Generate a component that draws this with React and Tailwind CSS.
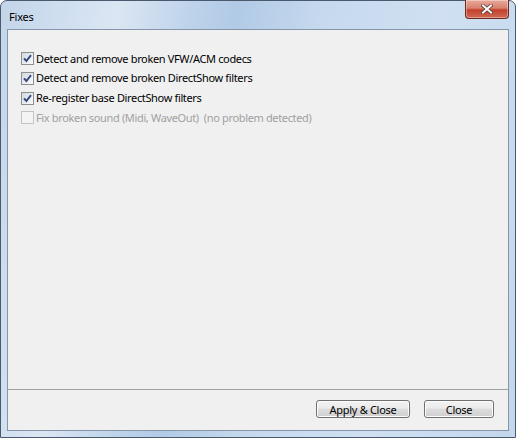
import { useState } from 'react';

const font = { fontFamily: '"Noto Sans", "Open Sans", sans-serif' };

function CheckBox({ checked, disabled }) {
  if (disabled) {
    return (
      <span className="w-[13px] h-[13px] border border-[#c4c4c4] bg-[#f4f4f4] shrink-0" />
    );
  }
  return (
    <span className="w-[13px] h-[13px] border border-[#8e8f8f] bg-[linear-gradient(135deg,#d3d9e1,#fbfbfc)] shrink-0 flex items-center justify-center">
      <svg width="9" height="9" viewBox="0 0 9 9">
        <path d="M1 4.3 L3.4 7 L8 1.2" fill="none" stroke="#35497e" strokeWidth="2" />
      </svg>
    </span>
  );
}

function WinButton({ children, width }) {
  return (
    <button
      className={`${width} h-[18px] rounded-[3px] border border-[#707070] bg-[linear-gradient(#f2f2f2_0%,#ebebeb_45%,#dddddd_50%,#cfcfcf_100%)] text-[11px] tracking-[-0.3px] leading-none text-black shadow-[inset_0_0_0_1px_#fcfcfc]`}
    >
      {children}
    </button>
  );
}

export default function App() {
  const [fixes] = useState([
    { label: 'Detect and remove broken VFW/ACM codecs', checked: true },
    { label: 'Detect and remove broken DirectShow filters', checked: true },
    { label: 'Re-register base DirectShow filters', checked: true },
    { label: 'Fix broken sound (Midi, WaveOut)  (no problem detected)', disabled: true },
  ]);

  return (
    <div
      style={font}
      className="w-[516px] h-[438px] flex flex-col border border-[#4a5a6e] rounded-t-[7px] px-[6px] pb-[6px] bg-[linear-gradient(100deg,#c3d5ea_0%,#d3e1f1_14%,#dbe6f3_20%,#bfd4eb_32%,#b1cae6_40%,#c6d9ee_55%,#d0e0f2_75%,#c3d7ed_100%)]"
    >
      <div className="h-[28px] flex items-start justify-between">
        <span className="text-[11px] tracking-[-0.2px] text-black mt-[8px] ml-[2px]">Fixes</span>
        <div className="w-[44px] h-[19px] -mt-px rounded-b-[4px] border border-[#6b2a20] border-t-0 bg-[linear-gradient(#e9a99a_0%,#d8826f_45%,#c2402b_55%,#d06a52_100%)] flex items-center justify-center shadow-[inset_0_0_0_1px_rgba(255,255,255,0.35)]">
          <svg width="12" height="10" viewBox="0 0 12 10">
            <path d="M2 1.5 L10 8.5 M10 1.5 L2 8.5" stroke="#5a3a34" strokeWidth="3.6" strokeLinecap="square" />
            <path d="M2 1.5 L10 8.5 M10 1.5 L2 8.5" stroke="#ffffff" strokeWidth="2" strokeLinecap="square" />
          </svg>
        </div>
      </div>

      <div className="flex-1 flex flex-col border border-[#8596ab] bg-[#f0f0f0]">
        <div className="flex-1 flex flex-col pt-[19px] pl-[13px]">
          {fixes.map((f) => (
            <div key={f.label} className="h-[19.7px] flex items-center gap-[2px]">
              <CheckBox checked={f.checked} disabled={f.disabled} />
              <span
                className={`text-[11px] tracking-[-0.35px] whitespace-pre ${f.disabled ? 'text-[#a0a0a0]' : 'text-black'}`}
              >
                {f.label}
              </span>
            </div>
          ))}
        </div>
        <div className="h-px bg-[#a0a0a0]" />
        <div className="h-[40px] flex items-start justify-end gap-[14px] pt-[10px] pr-[14px]">
          <WinButton width="w-[94px]">Apply &amp; Close</WinButton>
          <WinButton width="w-[70px]">Close</WinButton>
        </div>
      </div>
    </div>
  );
}
